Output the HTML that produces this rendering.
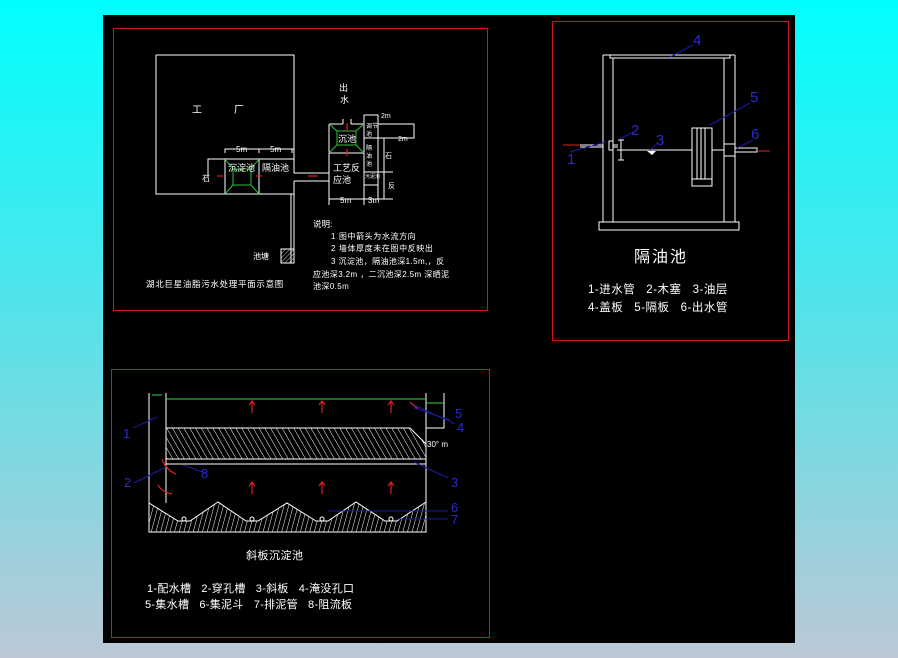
<!DOCTYPE html>
<html><head><meta charset="utf-8"><style>
html,body{margin:0;padding:0;width:898px;height:658px;overflow:hidden}
body{background:linear-gradient(#00ffff,#50e4ea 45%,#bcc8d6)}
svg{position:absolute;left:0;top:0}
text{font-family:"Liberation Sans","WenQuanYi Zen Hei","Noto Sans CJK SC",sans-serif;white-space:pre}
</style></head><body>
<svg width="898" height="658" viewBox="0 0 898 658" xml:space="preserve">
<defs>
<pattern id="h1" width="5" height="5" patternUnits="userSpaceOnUse" patternTransform="rotate(-30)"><line x1="0" y1="0" x2="0" y2="5" stroke="#fff" stroke-width="1"/></pattern>
<pattern id="h2" width="4.5" height="5" patternUnits="userSpaceOnUse" patternTransform="rotate(15)"><line x1="0" y1="0" x2="0" y2="5" stroke="#fff" stroke-width="1"/></pattern>
<pattern id="h3" width="3" height="3" patternUnits="userSpaceOnUse" patternTransform="rotate(45)"><line x1="0" y1="0" x2="0" y2="3" stroke="#fff" stroke-width="0.8"/></pattern>
</defs>
<rect x="103" y="15" width="692" height="628" fill="#000"/>
<g fill="none" stroke="#d01818" stroke-width="1">
<rect x="113.5" y="28.5" width="374" height="282"/>
<rect x="552.5" y="21.5" width="236" height="319"/>
<rect x="111.5" y="369.5" width="378" height="268"/>
</g>

<!-- Panel 1 -->
<g fill="none" stroke="#fff" stroke-width="1">
<path d="M156 55H294V173 M294 181V194H156V55"/>
<path d="M208 177V159H294 M225 159V194 M259 159V194"/>
<path d="M225 153V149H294 M259 149V153 M292 149V153"/>
<path d="M294 173H329 M294 181H329 M291 194V263 M294 194V263"/>
<rect x="281" y="249" width="13" height="14" fill="url(#h3)"/>
<path d="M329 124H343 M351 124H364 M329 124V199H393 M329 153H364 M343 124V119 M351 124V119"/>
<path d="M364 115H378V199 M364 115V199 M378 124H414V138H378 M364 138H378 M364 172H393 M364 185H378 M384 138V199"/>
<path d="M329 205V199 M364 205V199"/>
</g>
<g fill="none" stroke="#2fbf3f" stroke-width="1">
<rect x="233" y="169" width="18" height="16"/>
<path d="M225 159L233 169 M259 159L251 169 M225 194L233 185 M259 194L251 185"/>
<rect x="337" y="131" width="19" height="14"/>
<path d="M329 124L337 131 M364 124L356 131 M329 153L337 145 M364 153L356 145"/>
</g>
<g stroke="#e02020" stroke-width="1.2" fill="#e02020">
<path d="M217 176h6" /><path d="M256 176h6"/><path d="M308 176h10"/>
<path d="M347 131v-8"/><path d="M347 156v-7"/>
</g>
<g fill="#fff" font-size="9">
<text x="192" y="113" font-size="10">工</text><text x="234" y="113" font-size="10">厂</text>
<text x="236" y="152" font-size="8">5m</text><text x="270" y="152" font-size="8">5m</text>
<text x="228" y="171">沉淀池</text><text x="262" y="171">隔油池</text>
<text x="202" y="181" font-size="8">石</text>
<text x="339" y="91">出</text><text x="340" y="103">水</text>
<text x="338" y="142" font-size="9">沉池</text>
<text x="333" y="171">工艺反</text><text x="333" y="183">应池</text>
<text x="381" y="118" font-size="7">2m</text><text x="398" y="141" font-size="7">2m</text>
<text x="366" y="128" font-size="6">调节</text><text x="366" y="136" font-size="6">池</text>
<text x="366" y="150" font-size="6">隔</text><text x="366" y="158" font-size="6">油</text><text x="366" y="166" font-size="6">池</text>
<text x="385" y="158" font-size="7">石</text><text x="388" y="188" font-size="7">反</text>
<text x="365" y="178" font-size="5">污泥池</text>
<text x="340" y="203" font-size="8">5m</text><text x="368" y="203" font-size="8">3m</text>
<text x="253" y="259" font-size="8">池塘</text>
<text x="146" y="287" font-size="8.5" letter-spacing="0.7">湖北巨星油脂污水处理平面示意图</text>
<text x="313" y="227" font-size="8.5">说明:</text>
<text x="331" y="239" font-size="8" letter-spacing="0.6">1 图中箭头为水流方向</text>
<text x="331" y="251" font-size="8" letter-spacing="0.6">2 墙体厚度未在图中反映出</text>
<text x="331" y="264" font-size="8" letter-spacing="0.4">3 沉淀池，隔油池深1.5m,，反</text>
<text x="313" y="277" font-size="8" letter-spacing="0.4">应池深3.2m ，二沉池深2.5m 深晒泥</text>
<text x="313" y="289" font-size="8" letter-spacing="0.4">池深0.5m</text>
</g>

<!-- Panel 2 -->
<g fill="none" stroke="#fff" stroke-width="1">
<path d="M603 55V222 M613 58V222 M724 58V222 M735 55V222 M603 55H613 M724 55H735"/>
<path d="M610 55H730V58H610Z"/>
<rect x="599" y="222" width="140" height="8"/>
<path d="M580 145H603 M580 147H603 M613 145H618 M613 147H618"/>
<rect x="609" y="141" width="4" height="9"/>
<path d="M618 140H624 M621 140V160 M618 160H624 M617 150H692"/>
<rect x="692" y="128" width="20" height="58"/>
<path d="M697 128V179 M701 128V179 M705 128V179 M692 179H712 M712 150H724"/>
<path d="M735 148H757V152H735 M724 144H735 M724 156H735"/>
</g>
<path d="M647 151L652 155L656 151Z" fill="#fff"/>
<g stroke="#e02020" stroke-width="1"><path d="M563 145H580"/><path d="M757 151H770"/></g>
<g stroke="#1a1aa0" stroke-width="1" fill="none">
<path d="M670 57L693 45"/><path d="M710 125L750 103"/><path d="M737 148L753 140"/>
<path d="M570 152L606 142"/><path d="M620 139L633 132"/><path d="M650 150L658 143"/>
</g>
<g fill="#2a2acc" font-size="15">
<text x="693" y="45">4</text><text x="750" y="102">5</text><text x="751" y="139">6</text>
<text x="631" y="135">2</text><text x="656" y="145">3</text><text x="567" y="164">1</text>
</g>
<g fill="#fff">
<text x="634" y="262" font-size="16" letter-spacing="2">隔油池</text>
<text x="588" y="293" font-size="11.5" letter-spacing="0.5">1-进水管   2-木塞   3-油层</text>
<text x="588" y="311" font-size="11.5" letter-spacing="0.5">4-盖板   5-隔板   6-出水管</text>
</g>

<!-- Panel 3 -->
<path d="M166 428H410L426 444V459H166Z" fill="url(#h1)" stroke="#fff"/>
<path d="M149 503L178 521H190L218 502L246 521H258L287 503L316 521H328L356 502L385 521H397L426 502V532H149Z" fill="url(#h2)" stroke="#fff"/>
<g fill="none" stroke="#fff" stroke-width="1">
<path d="M149 393V532H426V393 M166 393V503 M426 428H444V393"/>
<path d="M166 459H426 M166 464H426"/>
</g>
<g fill="#000" stroke="#fff" stroke-width="1">
<circle cx="184" cy="519" r="2"/><circle cx="252" cy="519" r="2"/><circle cx="322" cy="519" r="2"/><circle cx="391" cy="519" r="2"/>
</g>
<g stroke="#3ad04a" stroke-width="1" fill="none"><path d="M166 399H426 M426 403H444 M152 395H162"/></g>
<g stroke="#e02020" stroke-width="1.2" fill="none">
<path d="M252 413V402M249 405L252 401L255 405"/><path d="M322 413V402M319 405L322 401L325 405"/><path d="M391 413V402M388 405L391 401L394 405"/>
<path d="M252 494V483M249 486L252 482L255 486"/><path d="M322 494V483M319 486L322 482L325 486"/><path d="M391 494V483M388 486L391 482L394 486"/>
<path d="M410 402L418 409"/><path d="M162 459Q166 470 176 474"/><path d="M158 485Q162 492 172 494"/>
</g>
<g stroke="#1a1aa0" stroke-width="1" fill="none">
<path d="M133 428L157 417"/><path d="M134 483L166 467"/><path d="M183 465L205 473"/>
<path d="M414 408L450 420"/><path d="M414 405L455 424"/><path d="M414 462L448 478"/>
<path d="M328 511H448"/><path d="M395 519H448"/>
</g>
<g fill="#2a2acc" font-size="13">
<text x="123" y="438">1</text><text x="124" y="487">2</text><text x="201" y="478">8</text>
<text x="455" y="418">5</text><text x="457" y="432">4</text><text x="451" y="487">3</text>
<text x="451" y="512">6</text><text x="451" y="524">7</text>
</g>
<g fill="#fff">
<text x="427" y="447" font-size="8">30° m</text>
<text x="246" y="559" font-size="11" letter-spacing="0.5">斜板沉淀池</text>
<text x="147" y="592" font-size="11" letter-spacing="0.3">1-配水槽   2-穿孔槽   3-斜板   4-淹没孔口</text>
<text x="145" y="608" font-size="11" letter-spacing="0.3">5-集水槽   6-集泥斗   7-排泥管   8-阻流板</text>
</g>
</svg>
</body></html>
